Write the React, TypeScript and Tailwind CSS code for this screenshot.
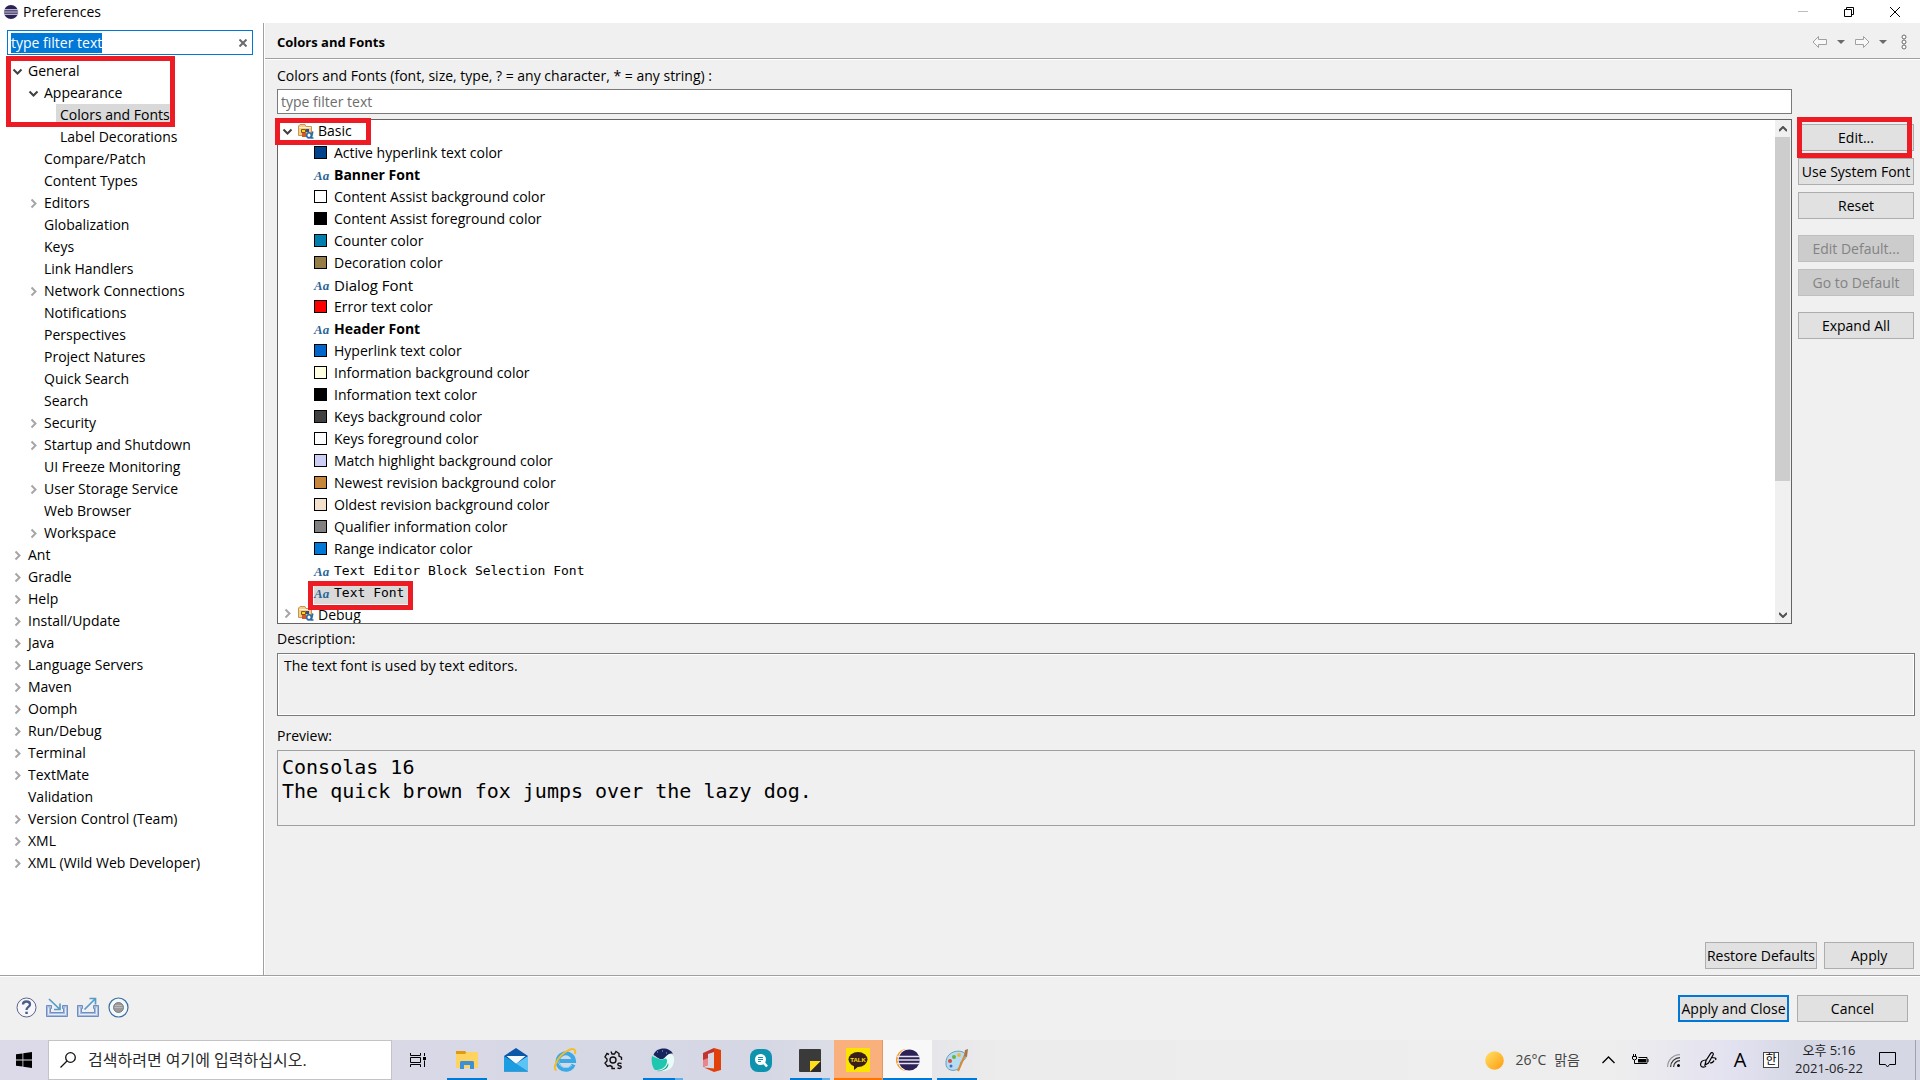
import { useEffect, useRef } from "react";
import type { ReactNode } from "react";

type TreeNode = {
  label: string;
  level: number;
  state?: "open" | "closed";
  selected?: boolean;
};

const tree: TreeNode[] = [
  { label: "General", level: 0, state: "open" },
  { label: "Appearance", level: 1, state: "open" },
  { label: "Colors and Fonts", level: 2, selected: true },
  { label: "Label Decorations", level: 2 },
  { label: "Compare/Patch", level: 1 },
  { label: "Content Types", level: 1 },
  { label: "Editors", level: 1, state: "closed" },
  { label: "Globalization", level: 1 },
  { label: "Keys", level: 1 },
  { label: "Link Handlers", level: 1 },
  { label: "Network Connections", level: 1, state: "closed" },
  { label: "Notifications", level: 1 },
  { label: "Perspectives", level: 1 },
  { label: "Project Natures", level: 1 },
  { label: "Quick Search", level: 1 },
  { label: "Search", level: 1 },
  { label: "Security", level: 1, state: "closed" },
  { label: "Startup and Shutdown", level: 1, state: "closed" },
  { label: "UI Freeze Monitoring", level: 1 },
  { label: "User Storage Service", level: 1, state: "closed" },
  { label: "Web Browser", level: 1 },
  { label: "Workspace", level: 1, state: "closed" },
  { label: "Ant", level: 0, state: "closed" },
  { label: "Gradle", level: 0, state: "closed" },
  { label: "Help", level: 0, state: "closed" },
  { label: "Install/Update", level: 0, state: "closed" },
  { label: "Java", level: 0, state: "closed" },
  { label: "Language Servers", level: 0, state: "closed" },
  { label: "Maven", level: 0, state: "closed" },
  { label: "Oomph", level: 0, state: "closed" },
  { label: "Run/Debug", level: 0, state: "closed" },
  { label: "Terminal", level: 0, state: "closed" },
  { label: "TextMate", level: 0, state: "closed" },
  { label: "Validation", level: 0 },
  { label: "Version Control (Team)", level: 0, state: "closed" },
  { label: "XML", level: 0, state: "closed" },
  { label: "XML (Wild Web Developer)", level: 0, state: "closed" },
];

const indent = ["pl-2", "pl-6", "pl-10"];

type Entry = { label: string; color?: string; font?: string; selected?: boolean };

const entries: Entry[] = [
  { label: "Active hyperlink text color", color: "bg-[#00438a]" },
  { label: "Banner Font", font: "text-[14px] font-bold" },
  { label: "Content Assist background color", color: "bg-white" },
  { label: "Content Assist foreground color", color: "bg-black" },
  { label: "Counter color", color: "bg-[#007fae]" },
  { label: "Decoration color", color: "bg-[#957d47]" },
  { label: "Dialog Font", font: "text-[15px]" },
  { label: "Error text color", color: "bg-[#ff0000]" },
  { label: "Header Font", font: "text-[14px] font-bold" },
  { label: "Hyperlink text color", color: "bg-[#0066cc]" },
  { label: "Information background color", color: "bg-[#ffffe1]" },
  { label: "Information text color", color: "bg-black" },
  { label: "Keys background color", color: "bg-[#404040]" },
  { label: "Keys foreground color", color: "bg-white" },
  { label: "Match highlight background color", color: "bg-[#cecdf6]" },
  { label: "Newest revision background color", color: "bg-[#c78639]" },
  { label: "Oldest revision background color", color: "bg-[#f2e1cf]" },
  { label: "Qualifier information color", color: "bg-[#808080]" },
  { label: "Range indicator color", color: "bg-[#0078d7]" },
  { label: "Text Editor Block Selection Font", font: "text-[13px] font-['DejaVu_Sans_Mono',monospace]" },
  { label: "Text Font", font: "text-[13px] font-['DejaVu_Sans_Mono',monospace]", selected: true },
];

function Chevron({ state }: { state?: "open" | "closed" }) {
  return (
    <svg className="w-5 h-4 shrink-0" viewBox="0 0 20 16" fill="none" strokeWidth="2">
      {state === "open" && <path d="M5.5 6.5 9.5 10.5 13.5 6.5" stroke="#404040" />}
      {state === "closed" && <path d="M7.5 4.5 11.5 8.5 7.5 12.5" stroke="#a6a6a6" />}
    </svg>
  );
}

function EclipseIcon({ className, ring }: { className: string; ring?: boolean }) {
  return (
    <svg className={className} viewBox="0 0 24 24">
      {ring && <circle cx="11" cy="12" r="11" fill="#f7941e" />}
      {ring && <circle cx="13" cy="12" r="11.3" fill="#fff" />}
      <circle cx={ring ? 13.2 : 12} cy="12" r="10.6" fill="#2c2255" />
      <path d="M1 8.5h23M1 12h23M1 15.5h23" stroke="#e6e4f0" strokeWidth="1.6" />
    </svg>
  );
}

function CategoryIcon() {
  return (
    <svg className="w-4 h-4 shrink-0" viewBox="0 0 16 16">
      <path d="M.5 3V12.500H13.500V3.500H8L7 1.500H2z" fill="#f3cf8d" stroke="#c9954c" />
      <path d="M1.500 4.500h11" stroke="#fff3d6" />
      <path d="M3.500 6.500h4v3h-4z" fill="#f7d51d" stroke="#7a5a1e" />
      <path d="M8 6h3v3H8z" fill="#3c4a8c" />
      <path d="M4 10h4v4H4z" fill="#d9532c" />
      <ellipse cx="11" cy="12.300" rx="2.300" ry="2.600" fill="#fff" stroke="#2b6ca3" strokeWidth="1.600" />
      <path d="M14.800 8.500 13.300 15H15.500" fill="none" stroke="#2b6ca3" strokeWidth="1.600" />
    </svg>
  );
}

function PushButton({ children, className = "w-full", disabled }: { children: ReactNode; className?: string; disabled?: boolean }) {
  return (
    <button
      disabled={disabled}
      className={`${className} h-[27px] border border-[#adadad] bg-[#e1e1e1] whitespace-nowrap disabled:border-[#bfbfbf] disabled:bg-[#cccccc] disabled:text-[#838383]`}
    >
      {children}
    </button>
  );
}

function TitleBar() {
  return (
    <header className="h-[23px] flex items-center justify-between bg-white pl-[3px] pr-[2px]">
      <div className="flex items-center gap-1">
        <EclipseIcon className="w-4 h-4" />
        <h1>Preferences</h1>
      </div>
      <div className="flex">
        <button aria-label="Minimize" className="w-[46px] h-5 flex items-center justify-center">
          <span className="w-[10px] h-px bg-[#bdbdbd]" />
        </button>
        <button aria-label="Restore" className="w-[46px] h-5 flex items-center justify-center">
          <svg className="w-[10px] h-[10px]" viewBox="0 0 10 10" fill="none" stroke="#000">
            <path d="M.5 2.500h7v7h-7zM2.500 2.500v-2h7v7h-2" />
          </svg>
        </button>
        <button aria-label="Close" className="w-[46px] h-5 flex items-center justify-center">
          <svg className="w-[10px] h-[10px]" viewBox="0 0 10 10" stroke="#000">
            <path d="M0 0 10 10M10 0 0 10" />
          </svg>
        </button>
      </div>
    </header>
  );
}

function Sidebar() {
  const filter = useRef<HTMLInputElement>(null);

  useEffect(() => {
    filter.current?.focus();
    filter.current?.select();
  }, []);

  return (
    <aside className="w-[264px] shrink-0 border-r border-[#a0a0a0] bg-white pt-[7px]">
      <div className="ml-[7px] mr-[10px] h-[25px] flex items-center border border-[#0078d7] px-[3px]">
        <input
          ref={filter}
          aria-label="Filter preferences"
          defaultValue="type filter text"
          className="min-w-0 flex-1 outline-none selection:bg-[#0078d7] selection:text-white"
        />
        <button aria-label="Clear filter" className="w-3 h-3 flex items-center justify-center">
          <svg className="w-2 h-2" viewBox="0 0 8 8" stroke="#6b6b6b" strokeWidth="2">
            <path d="M.5.500 7.500 7.500M7.500.500.5 7.500" />
          </svg>
        </button>
      </div>
      <ul className="relative mt-[5px]">
        {tree.map((node) => (
          <li key={node.label} className={`h-[22px] flex items-center ${indent[node.level]}`}>
            <Chevron state={node.state} />
            <a
              href="#"
              className={
                node.selected
                  ? "h-[22px] leading-[22px] bg-[#d9d9d9] pr-1 -ml-1 pl-1"
                  : "leading-[22px]"
              }
            >
              {node.label}
            </a>
          </li>
        ))}
        <li aria-hidden className="absolute left-[6px] -top-1 w-[169px] h-[71px] border-[5px] border-[#ed1c24]" />
      </ul>
    </aside>
  );
}

function FontList() {
  return (
    <div className="h-[505px] flex border border-[#646464] bg-white">
      <ul className="flex-1 -mr-4">
        <li className="relative h-[22px] flex items-center">
          <Chevron state="open" />
          <CategoryIcon />
          <span className="ml-1">Basic</span>
          <span aria-hidden className="absolute -left-[3px] -top-[2px] w-24 h-[27px] border-[5px] border-[#ed1c24]" />
        </li>
        {entries.map((entry) => (
          <li key={entry.label} className="h-[22px] flex items-center pl-9">
            <div className={`relative h-[22px] flex items-center ${entry.selected ? "bg-[#d9d9d9] pr-1" : ""}`}>
              <span className="w-5 shrink-0">
                {entry.color ? (
                  <span className={`block mb-px w-[13px] h-[13px] border border-black ${entry.color}`} />
                ) : (
                  <span className="text-[13px] italic font-bold text-[#2a6496] font-['Liberation_Serif',serif]">Aa</span>
                )}
              </span>
              <span className={entry.font}>{entry.label}</span>
              {entry.selected && (
                <span aria-hidden className="absolute -left-[6px] -top-px w-[105px] h-[29px] border-[5px] border-[#ed1c24]" />
              )}
            </div>
          </li>
        ))}
        {/* last visible row is cut off by the bottom of the list */}
        <li className="h-[19px] overflow-hidden flex items-start pt-px">
          <Chevron state="closed" />
          <CategoryIcon />
          <span className="ml-1 leading-5">Debug</span>
        </li>
      </ul>
      <div className="relative w-4 flex flex-col bg-[#f0f0f0]">
        <button aria-label="Scroll up" className="h-[17px] flex items-center justify-center">
          <svg className="w-2 h-[6px]" viewBox="0 0 8 6" fill="none" stroke="#505050" strokeWidth="2">
            <path d="M0 5 4 1 8 5" />
          </svg>
        </button>
        <div className="mr-px h-[344px] bg-[#cdcdcd]" />
        <button aria-label="Scroll down" className="mt-auto h-[17px] flex items-center justify-center">
          <svg className="w-2 h-[6px]" viewBox="0 0 8 6" fill="none" stroke="#505050" strokeWidth="2">
            <path d="M0 1 4 5 8 1" />
          </svg>
        </button>
      </div>
    </div>
  );
}

function HistoryTools() {
  return (
    <div className="flex items-center gap-2 text-[#a0a0a0]">
      <button aria-label="Back">
        <svg className="w-4 h-3" viewBox="0 0 16 12" fill="#f8f8f8" stroke="currentColor">
          <path d="M1 6 6.500.500V3.500H14.500V8.500H6.500V11.500z" />
        </svg>
      </button>
      <button aria-label="Back history">
        <svg className="w-[10px] h-2" viewBox="0 0 10 8" fill="#6a6a6a">
          <path d="M1 2H9L5 6z" />
        </svg>
      </button>
      <button aria-label="Forward">
        <svg className="w-4 h-3" viewBox="0 0 16 12" fill="#f8f8f8" stroke="currentColor">
          <path d="M15 6 9.500.500V3.500H1.500V8.500H9.500V11.500z" />
        </svg>
      </button>
      <button aria-label="Forward history">
        <svg className="w-[10px] h-2" viewBox="0 0 10 8" fill="#6a6a6a">
          <path d="M1 2H9L5 6z" />
        </svg>
      </button>
      <button aria-label="View menu" className="ml-[2px]">
        <svg className="w-3 h-4" viewBox="0 0 12 16" fill="#fff" stroke="#6a6a6a">
          <circle cx="6" cy="3" r="2" />
          <circle cx="6" cy="8" r="2" />
          <circle cx="6" cy="13" r="2" />
        </svg>
      </button>
    </div>
  );
}

function PreferencePage() {
  return (
    <main className="flex-1 min-w-0 flex flex-col border-l border-white">
      <div className="h-9 flex items-center justify-between border-b border-[#a0a0a0] pl-3 pr-[10px] pt-[2px]">
        <h2 className="text-[13px] font-bold">Colors and Fonts</h2>
        <HistoryTools />
      </div>
      <div className="flex-1 flex flex-col border-t border-white pl-3 pr-[5px] pb-[6px]">
        <label htmlFor="font-filter" className="mt-[5px] h-6 leading-[22px]">
          Colors and Fonts (font, size, type, ? = any character, * = any string) :
        </label>
        <div className="flex gap-[6px] pr-px">
          <div className="flex-1 min-w-0">
            <input
              id="font-filter"
              placeholder="type filter text"
              className="w-full h-[25px] border border-[#7a7a7a] bg-white px-[3px] placeholder:text-[#6d6d6d] outline-none"
            />
            <div className="mt-[5px]">
              <FontList />
            </div>
          </div>
          <div className="w-[116px] shrink-0 pt-[35px] flex flex-col gap-[7px]">
            <div className="relative">
              <PushButton>Edit...</PushButton>
              <span aria-hidden className="absolute -left-px -top-[7px] w-[115px] h-[41px] border-[5px] border-[#ed1c24]" />
            </div>
            <PushButton>Use System Font</PushButton>
            <PushButton>Reset</PushButton>
            <div className="mt-[9px] flex flex-col gap-[7px]">
              <PushButton disabled>Edit Default...</PushButton>
              <PushButton disabled>Go to Default</PushButton>
            </div>
            <div className="mt-[9px]">
              <PushButton>Expand All</PushButton>
            </div>
          </div>
        </div>
        <label htmlFor="description" className="mt-[5px] h-6 leading-5">
          Description:
        </label>
        <textarea
          id="description"
          readOnly
          value="The text font is used by text editors."
          className="h-[63px] shrink-0 resize-none border border-[#7a7a7a] px-[6px] pt-[3px] leading-[18px] outline-none inset-ring inset-ring-white"
        />
        <h3 className="mt-[10px] h-6 leading-5">Preview:</h3>
        <div className="h-[76px] shrink-0 border border-[#a0a0a0] px-1 pt-1 text-[20px] leading-6 font-['DejaVu_Sans_Mono',monospace]">
          <p>Consolas 16</p>
          <p>The quick brown fox jumps over the lazy dog.</p>
        </div>
        <div className="mt-auto flex justify-end gap-[7px] pr-px">
          <PushButton className="w-28">Restore Defaults</PushButton>
          <PushButton className="w-[90px]">Apply</PushButton>
        </div>
      </div>
    </main>
  );
}

function DialogFooter() {
  return (
    <footer className="border-t border-[#a0a0a0]">
      <div className="h-16 flex items-center justify-between border-t border-white pl-4 pr-3">
        <div className="flex items-center gap-[9px] pb-[3px]">
          <button aria-label="Help">
            <svg className="w-[21px] h-[21px]" viewBox="0 0 21 21" fill="none">
              <circle cx="10.500" cy="10.500" r="9.500" fill="#f7f7fb" stroke="#5b6688" />
              <path d="M7 7.500C7 3.500 14 3.500 14 7.500 14 10 10.500 10 10.500 13" stroke="#4c5d8c" strokeWidth="2.300" />
              <path d="M9.300 14.700h2.500v2.300H9.300z" fill="#4c5d8c" />
            </svg>
          </button>
          <button aria-label="Import preferences">
            <svg className="w-[22px] h-[21px]" viewBox="0 0 22 21" fill="none">
              <path d="M.5 8.500H5.500V11.500H4.500V15.500H17.500V11.500H16.500V8.500H21.500V19.500H.5z" fill="#a7bbdf" stroke="#6f8dc0" />
              <path d="M2.500 10.500V17.500H19.500V10.500" stroke="#e4ecf8" />
              <path d="M3 2 13.500 12M14 6.500V12.500H8" stroke="#579bc6" strokeWidth="1.700" />
            </svg>
          </button>
          <button aria-label="Export preferences">
            <svg className="w-[22px] h-[21px]" viewBox="0 0 22 21" fill="none">
              <path d="M.5 8.500H5.500V11.500H4.500V15.500H17.500V11.500H16.500V8.500H21.500V19.500H.5z" fill="#a7bbdf" stroke="#6f8dc0" />
              <path d="M2.500 10.500V17.500H19.500V10.500" stroke="#e4ecf8" />
              <path d="M7.500 12.500 18 2M12.500 1.500H18.500V7.500" stroke="#579bc6" strokeWidth="1.700" />
            </svg>
          </button>
          <button aria-label="Oomph recorder">
            <svg className="w-[21px] h-[21px]" viewBox="0 0 21 21">
              <circle cx="10.500" cy="10.500" r="9.500" fill="#f4f9fd" stroke="#3a6f9f" strokeWidth="1.200" />
              <circle cx="10.500" cy="10.500" r="5" fill="#9a9a9a" stroke="#7d7d7d" />
              <path d="M7 8.500h7M6.500 10.500h8" stroke="#b9b9b9" />
            </svg>
          </button>
        </div>
        <div className="flex gap-2">
          <button className="w-[111px] h-[27px] border-2 border-[#0078d7] bg-[#e1e1e1] whitespace-nowrap">
            Apply and Close
          </button>
          <PushButton className="w-[111px]">Cancel</PushButton>
        </div>
      </div>
    </footer>
  );
}

type TaskbarApp = { name: string; icon: ReactNode; tone?: string; bar?: string };

const apps: TaskbarApp[] = [
  {
    name: "Task View",
    icon: (
      <svg className="w-4 h-4" viewBox="0 0 16 16" fill="none" stroke="#000">
        <path d="M.5 1V3.500H10.500V1M.5 15V12.500H10.500V15M.5 5.500H10.500V10.500H.5zM14.500 1V4M14.500 8.500V15" />
        <path d="M13 5h3v3h-3z" fill="#000" stroke="none" />
      </svg>
    ),
  },
  {
    name: "File Explorer",
    bar: "bg-[#0078d7]",
    icon: (
      <svg className="w-[22px] h-[18px]" viewBox="0 0 22 18">
        <path d="M0 0h9l2 2v4H0z" fill="#e29a0c" />
        <path d="M0 3h9l2-2h11v16H0z" fill="#ffd35f" />
        <path d="M4 18v-7l1-1h12l1 1v7h-4v-4H8v4z" fill="#3d8fd6" />
      </svg>
    ),
  },
  {
    name: "Mail",
    icon: (
      <svg className="w-6 h-6" viewBox="0 0 24 24">
        <path d="M0 8 12 0 24 8V23.500H0z" fill="#0a56a8" />
        <path d="M2.500 8h19L12 16z" fill="#f4f8fc" />
        <path d="M0 8 24 23.500H0z" fill="#1b9de2" />
        <path d="M24 8 12 15.700 24 23.500z" fill="#5cc4f5" />
      </svg>
    ),
  },
  {
    name: "Internet Explorer",
    icon: (
      <svg className="w-6 h-6" viewBox="0 0 24 24" fill="none">
        <path d="M20.500 16.500A8.200 8.200 0 1 1 21 13H7" stroke="#3ba9e6" strokeWidth="4" />
        <path d="M19 17A8.200 8.200 0 0 1 5 14" stroke="#8bd3f6" />
        <path d="M3.500 22.500C-1 20 5 8 14 3 20-.5 24 1 21.500 6" stroke="#f4bd26" strokeWidth="2" />
      </svg>
    ),
  },
  {
    name: "Settings",
    icon: (
      <svg className="w-[19px] h-5" viewBox="0 0 19 20" fill="none" stroke="#111" strokeWidth="1.400">
        <path d="M7 1.500 8 4H10.500L12 1.500 15 3.500V6L17.500 7.500V10M5 4.500 3 3.500 1 7 3 9V11L1 13 3.500 16.500 6 15.500 8 16.500V18.500H11" />
        <circle cx="9" cy="10" r="3" />
        <path d="M17.500 13.500C13 12 13 15.500 15.500 15.800 18.500 16 17.500 19.500 13.500 18" />
      </svg>
    ),
  },
  {
    name: "Whale",
    bar: "bg-[linear-gradient(90deg,#0078d7_80%,#62aee6_80%)]",
    icon: (
      <svg className="w-6 h-6" viewBox="0 0 24 24">
        <path d="M12 23C4 23 1 18 1 8 5 9 8 13 13 11 16 4 20 4 23 9 24 18 19 23 12 23z" fill="#e9fbf6" />
        <path d="M2.500 7C5-1.500 19-1.500 22 6 18 4 15 9 12 11 8 12 5 8 2.500 7z" fill="#18245c" />
        <path d="M1 8C5 9 8 13 13 11 16 9 17 13 15 17 13 20 10 22 4 22 1 19 0 13 1 8z" fill="#1fc6b0" />
        <path d="M5 23C11 23 16 20 17 15 19 19 13 24 5 23z" fill="#0f9f92" />
        <path d="M6 4h1M11 3h1M15 5h1" stroke="#8fb0ff" />
      </svg>
    ),
  },
  {
    name: "Office",
    icon: (
      <svg className="w-[18px] h-6" viewBox="0 0 18 24">
        <path d="M11 0 18 2V22L11 24 1 19.500 11 20.500z" fill="#e2400a" />
        <path d="M0 5 11 0V4L5 6V17L0 19z" fill="#c3342f" />
        <path d="M0 12V19L5 17V10z" fill="#e8858d" />
      </svg>
    ),
  },
  {
    name: "Quick Search",
    icon: (
      <svg className="w-[22px] h-[23px]" viewBox="0 0 22 23" fill="none">
        <rect width="22" height="23" rx="8" fill="#0e93ae" />
        <circle cx="10.500" cy="10.500" r="5.500" fill="#fff" />
        <path d="M14 14 17 17.500" stroke="#fff" strokeWidth="2.500" />
        <path d="M8 8.500h5M8 10.500h5M8 12.500h3" stroke="#0e93ae" />
      </svg>
    ),
  },
  {
    name: "Sticky Notes",
    bar: "bg-[linear-gradient(90deg,#0078d7_80%,#62aee6_80%)]",
    icon: (
      <svg className="w-[22px] h-[23px]" viewBox="0 0 22 23">
        <rect width="22" height="23" rx="1" fill="#3a3a3a" />
        <path d="M11 12H22L11 23z" fill="#ffdf1c" />
        <path d="M22 12V23H11z" fill="#2b2b2b" />
      </svg>
    ),
  },
  {
    name: "KakaoTalk",
    tone: "bg-[#fab07c] border-r border-[#dd9a6c]",
    bar: "bg-[#ff7500] w-full",
    icon: (
      <svg className="w-6 h-6" viewBox="0 0 24 24">
        <path d="M0 0h24v24H0z" fill="#fbe300" />
        <ellipse cx="12" cy="11.500" rx="9.500" ry="7.500" fill="#3a1d1d" />
        <path d="M8 17v5l5-4z" fill="#3a1d1d" />
        <text x="12" y="14" textAnchor="middle" fontSize="6" fontWeight="700" fontFamily="Liberation Sans, sans-serif" fill="#fbe300">
          TALK
        </text>
      </svg>
    ),
  },
  {
    name: "Eclipse",
    tone: "bg-[#f8f8f8]",
    bar: "bg-[#0078d7] w-full",
    icon: <EclipseIcon className="w-6 h-6" ring />,
  },
  {
    name: "Paint",
    bar: "bg-[#0078d7]",
    icon: (
      <svg className="w-6 h-6" viewBox="0 0 24 24">
        <path d="M1 16C0 6 10 1 18 4 23 7 21 12 17 13 14 14 17 18 13 21 8 24 1 22 1 16z" fill="#b5dcf1" stroke="#6a9fc0" />
        <circle cx="5" cy="13" r="2" fill="#d94b3f" />
        <circle cx="9" cy="9" r="2" fill="#6cb33e" />
        <circle cx="14" cy="7" r="2" fill="#efb73a" />
        <circle cx="6" cy="18" r="1.500" fill="#3e6fc4" />
        <path d="M13 23 20 7" stroke="#d98a36" strokeWidth="2" />
        <path d="M19 8 20 2 23 1 22 9z" fill="#a8754a" />
      </svg>
    ),
  },
];

function Taskbar() {
  return (
    <nav
      aria-label="Taskbar"
      className="h-10 flex items-stretch bg-[linear-gradient(90deg,#dcdae8_0%,#d5d7e4_40%,#ececec_52%,#eeeeee_84%,#e3e2f0_90%,#d5d7e5_94%)]"
    >
      <button aria-label="Start" className="w-12 flex items-center justify-center">
        <svg className="w-4 h-4" viewBox="0 0 16 16">
          <path d="M0 2.300 6.500 1.400V7.600H0zM7.300 1.300 16 0V7.600H7.300zM0 8.400H6.500V14.600L0 13.700zM7.300 8.400H16V16L7.300 14.700z" />
        </svg>
      </button>
      <div className="w-[344px] flex items-center border border-[#c4c4c8] bg-white pl-[11px] gap-3">
        <svg className="w-4 h-4 shrink-0" viewBox="0 0 16 16" fill="none" stroke="#111" strokeWidth="1.300">
          <circle cx="10.500" cy="5.500" r="4.800" />
          <path d="M7 9 .5 15.500" />
        </svg>
        <input
          aria-label="Windows search"
          placeholder="검색하려면 여기에 입력하십시오."
          className="flex-1 min-w-0 text-[16px] placeholder:text-[#2b2b2b] outline-none"
        />
      </div>
      <div className="flex pl-px">
        {apps.map((app) => (
          <button
            key={app.name}
            aria-label={app.name}
            className={`relative w-[49px] flex items-center justify-center ${app.tone ?? ""}`}
          >
            {app.icon}
            {app.bar && <span className={`absolute bottom-0 h-[2px] min-w-10 ${app.bar}`} />}
          </button>
        ))}
      </div>
      <div className="ml-auto flex items-center">
        <button className="flex items-center gap-[11px] text-[#444444]">
          <svg className="w-[19px] h-[19px]" viewBox="0 0 19 19">
            <defs>
              <linearGradient id="sun" x1="0" y1="0" x2="1" y2="1">
                <stop offset="0" stopColor="#ffe26a" />
                <stop offset="1" stopColor="#ff9a0a" />
              </linearGradient>
            </defs>
            <circle cx="9.500" cy="9.500" r="9.300" fill="url(#sun)" />
          </svg>
          <span className="flex gap-2">
            <span>26°C</span>
            <span>맑음</span>
          </span>
        </button>
        <button aria-label="Show hidden icons" className="ml-[22px]">
          <svg className="w-[13px] h-2" viewBox="0 0 13 8" fill="none" stroke="#000" strokeWidth="1.300">
            <path d="M.5 7 6.500 1 12.500 7" />
          </svg>
        </button>
        <button aria-label="Battery" className="ml-[17px]">
          <svg className="w-[17px] h-3" viewBox="0 0 17 12" fill="none" stroke="#000">
            <path d="M6.500 3.500H15V9.500H4.500M16 5v3M1.500 0V2.500M3.500 0V2.500M.5 2.500H4.500V5L2.500 6 .5 5zM2.500 6V9.500H5" />
            <path d="M6 5h8v3.500H6z" fill="#000" stroke="none" />
          </svg>
        </button>
        <button aria-label="Network" className="ml-[18px]">
          <svg className="w-[13px] h-[13px]" viewBox="0 0 13 13" fill="none" strokeWidth="1.200">
            <path d="M.6 13A12.400 12.400 0 0 1 13 .6" stroke="#999" />
            <path d="M3.600 13A9.400 9.400 0 0 1 13 3.600M6.600 13A6.400 6.400 0 0 1 13 6.600" stroke="#333" />
            <circle cx="11.500" cy="11.500" r="1.500" fill="#000" />
          </svg>
        </button>
        <button aria-label="Windows Ink" className="ml-5">
          <svg className="w-[17px] h-4" viewBox="0 0 17 16" fill="none" stroke="#000" strokeWidth="1.200">
            <path d="M5 13 6 8.500 11 1C12 0 14 1 13 3L8.500 11z" />
            <path d="M6 8C2 8 .5 10 .6 13 1 16 5 15.500 6 14M10 11C11 11 13 11 14 8.500M12 5.500C14 6 17 5.500 15.500 8" />
          </svg>
        </button>
        <span className="ml-3 w-[22px] text-center text-[20px] leading-6">A</span>
        <button className="ml-3 w-4 h-4 border border-[#444444] bg-white text-[12px] leading-[14px]">한</button>
        <button className="ml-4 w-[68px] pb-[2px] text-center text-[13px] leading-[18px] text-[#222222]">
          <span className="block">오후 5:16</span>
          <span className="block">2021-06-22</span>
        </button>
        <button aria-label="Notifications" className="ml-4 mr-[19px]">
          <svg className="w-[17px] h-4" viewBox="0 0 17 16" fill="none" stroke="#000">
            <path d="M.5.500H16.500V12.500H10.500L8.500 15 6.500 12.500H.5z" />
          </svg>
        </button>
        <button aria-label="Show desktop" className="w-[5px] h-10 border-l border-[#a0a2b0]" />
      </div>
    </nav>
  );
}

export default function App() {
  return (
    <div className="min-h-screen flex flex-col bg-[#f0f0f0] text-[14px] leading-5 text-black font-['Open_Sans','Noto_Sans_CJK_KR',sans-serif]">
      <TitleBar />
      <div className="flex-1 flex">
        <Sidebar />
        <PreferencePage />
      </div>
      <DialogFooter />
      <Taskbar />
    </div>
  );
}
